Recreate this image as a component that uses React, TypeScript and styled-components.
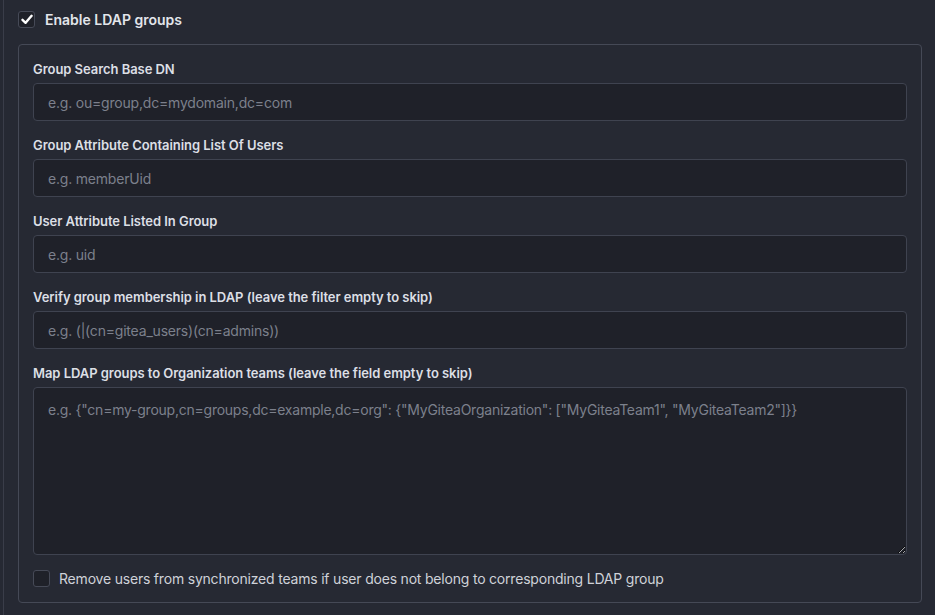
import { FC } from 'react'
import styled, { createGlobalStyle } from 'styled-components'

const GlobalStyle = createGlobalStyle`
  html, body {
    margin: 0;
    padding: 0;
    background: #262933;
    color-scheme: dark;
  }
  body {
    font-family: Inter, "Noto Sans", "Liberation Sans", sans-serif;
    color: #d7dae0;
  }
`

const Segment = styled.div`
  margin-left: 3px;
  border-left: 1px solid #3a3d49;
  padding: 11px 13px 12px 14px;
  min-height: 615px;
  box-sizing: border-box;
`

const CheckRow = styled.label`
  display: flex;
  align-items: center;
  gap: 9px;
  height: 17px;
  cursor: pointer;
`

const TopRow = styled(CheckRow)`
  margin-bottom: 16px;
`

const Box = styled.span<{ $checked?: boolean }>`
  width: 17px;
  height: 17px;
  box-sizing: border-box;
  flex: none;
  border: 1px solid #464a57;
  border-radius: 3px;
  background: #1f2129;
  display: flex;
  align-items: center;
  justify-content: center;
`

const CheckTitle = styled.span`
  font-size: 14px;
  font-weight: 600;
  color: #e2e5eb;
  margin-left: 1px;
`

const CheckText = styled.span`
  font-size: 14px;
  letter-spacing: -0.2px;
  color: #cfd2d9;
`

const Fieldset = styled.div`
  border: 1px solid #454956;
  border-radius: 4px;
  padding: 15px 14px 15px 14px;
`

const Field = styled.div`
  margin-bottom: 15px;
`

const Label = styled.label`
  display: block;
  font-size: 13px;
  font-weight: 600;
  line-height: 18px;
  letter-spacing: -0.05px;
  margin-bottom: 5px;
  color: #dcdfe5;
`

const Input = styled.input`
  display: block;
  width: 100%;
  height: 38px;
  box-sizing: border-box;
  padding: 0 14px;
  border: 1px solid #3f4350;
  border-radius: 4px;
  background: #1f2129;
  color: #d7dae0;
  font-family: inherit;
  font-size: 14px;
  letter-spacing: -0.2px;
  outline: none;

  &::placeholder {
    color: #7c808c;
  }
`

const TextArea = styled.textarea`
  display: block;
  width: 100%;
  height: 168px;
  box-sizing: border-box;
  padding: 12px 14px;
  border: 1px solid #3f4350;
  border-radius: 4px;
  background: #1f2129;
  color: #d7dae0;
  font-family: inherit;
  font-size: 14px;
  line-height: 20px;
  letter-spacing: -0.24px;
  resize: vertical;
  outline: none;

  &::placeholder {
    color: #7c808c;
  }
`

const Check: FC = () => (
  <svg width="12" height="11" viewBox="0 0 12 11">
    <path d="M1.5 5.8 L4.6 8.8 L10.6 1.8" fill="none" stroke="#ffffff" strokeWidth="2.4" strokeLinecap="round" strokeLinejoin="round" />
  </svg>
)

const fields = [
  { label: 'Group Search Base DN', placeholder: 'e.g. ou=group,dc=mydomain,dc=com' },
  { label: 'Group Attribute Containing List Of Users', placeholder: 'e.g. memberUid' },
  { label: 'User Attribute Listed In Group', placeholder: 'e.g. uid' },
  {
    label: 'Verify group membership in LDAP (leave the filter empty to skip)',
    placeholder: 'e.g. (|(cn=gitea_users)(cn=admins))',
  },
]

const App: FC = () => (
  <>
    <GlobalStyle />
    <Segment>
      <TopRow>
        <Box $checked>
          <Check />
        </Box>
        <CheckTitle>Enable LDAP groups</CheckTitle>
      </TopRow>
      <Fieldset>
        {fields.map((f) => (
          <Field key={f.label}>
            <Label>{f.label}</Label>
            <Input placeholder={f.placeholder} />
          </Field>
        ))}
        <Field>
          <Label>Map LDAP groups to Organization teams (leave the field empty to skip)</Label>
          <TextArea placeholder='e.g. {"cn=my-group,cn=groups,dc=example,dc=org": {"MyGiteaOrganization": ["MyGiteaTeam1", "MyGiteaTeam2"]}}' />
        </Field>
        <CheckRow>
          <Box />
          <CheckText>Remove users from synchronized teams if user does not belong to corresponding LDAP group</CheckText>
        </CheckRow>
      </Fieldset>
    </Segment>
  </>
)

export default App
